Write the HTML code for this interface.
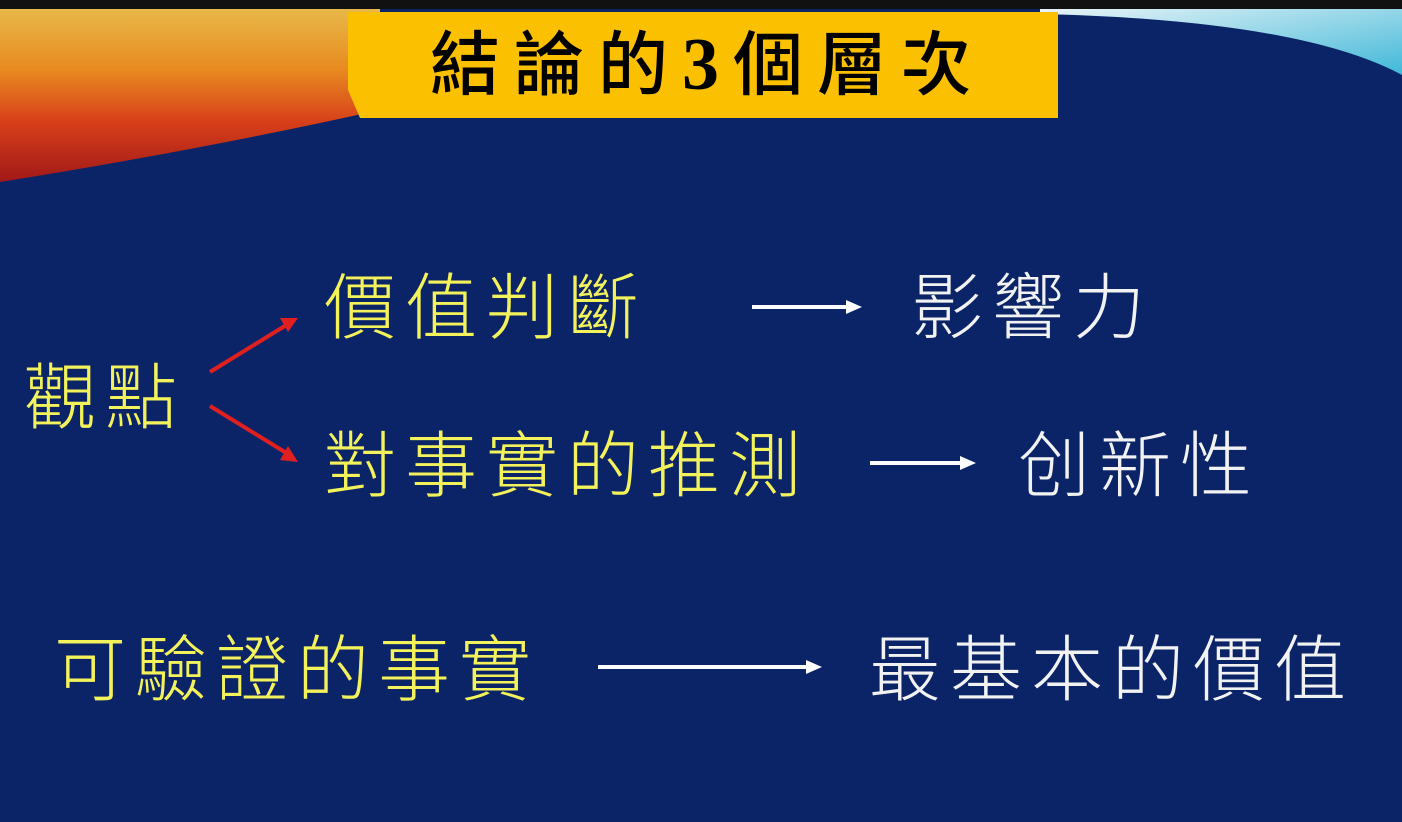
<!DOCTYPE html>
<html><head><meta charset="utf-8"><style>
body{margin:0;width:1402px;height:822px;overflow:hidden;background:#0b2468;position:relative;font-family:"Liberation Sans","Noto Sans CJK TC",sans-serif}
.t{position:absolute;font-size:72px;line-height:80px;letter-spacing:9px;white-space:nowrap;font-weight:300}
.y{color:#f4f25a}.w{color:#f2f2f2}
</style></head><body>
<svg width="1402" height="822" style="position:absolute;left:0;top:0">
<defs>
<linearGradient id="g" x1="0" y1="0" x2="0" y2="1">
<stop offset="0" stop-color="#e8b848"/><stop offset="0.35" stop-color="#e88a20"/><stop offset="0.65" stop-color="#d8401a"/><stop offset="1" stop-color="#a01818"/></linearGradient>
<linearGradient id="c" x1="0" y1="0" x2="1" y2="1"><stop offset="0" stop-color="#e8f4f8"/><stop offset="1" stop-color="#40b8d8"/></linearGradient>
</defs>
<rect x="0" y="0" width="1402" height="9" fill="#111"/>
<path d="M0 9 L380 9 L380 110 Q200 150 0 182 Z" fill="url(#g)"/>
<path d="M1040 9 L1402 9 L1402 75 Q1300 20 1040 14 Z" fill="url(#c)"/>
<polygon points="348,12 1058,12 1058,118 360,118 348,90" fill="#fbc000"/>
<line x1="752" y1="307" x2="848" y2="307" stroke="#fff" stroke-width="4"/><polygon points="846,300 862,307 846,314" fill="#fff"/>
<line x1="870" y1="463" x2="962" y2="463" stroke="#fff" stroke-width="4"/><polygon points="960,456 976,463 960,470" fill="#fff"/>
<line x1="598" y1="667" x2="808" y2="667" stroke="#fff" stroke-width="4"/><polygon points="806,660 822,667 806,674" fill="#fff"/>
<line x1="210" y1="372" x2="288" y2="324" stroke="#e02020" stroke-width="4"/><polygon points="298,318 280,318 288,332" fill="#e02020"/>
<line x1="210" y1="406" x2="288" y2="454" stroke="#e02020" stroke-width="4"/><polygon points="298,462 288,446 280,460" fill="#e02020"/>
</svg>
<div class="t" style="left:430px;top:25px;color:#000;font-size:70px;letter-spacing:14px;font-weight:500;font-family:'Liberation Serif','Noto Sans CJK TC',serif">結論的<b style="font-size:74px">3</b>個層次</div>
<div class="t y" style="left:324px;top:269px">價值判斷</div>
<div class="t y" style="left:324px;top:427px">對事實的推測</div>
<div class="t y" style="left:24px;top:359px">觀點</div>
<div class="t y" style="left:54px;top:631px">可驗證的事實</div>
<div class="t w" style="left:911px;top:269px">影響力</div>
<div class="t w" style="left:1018px;top:427px">创新性</div>
<div class="t w" style="left:869px;top:631px">最基本的價值</div>
</body></html>
